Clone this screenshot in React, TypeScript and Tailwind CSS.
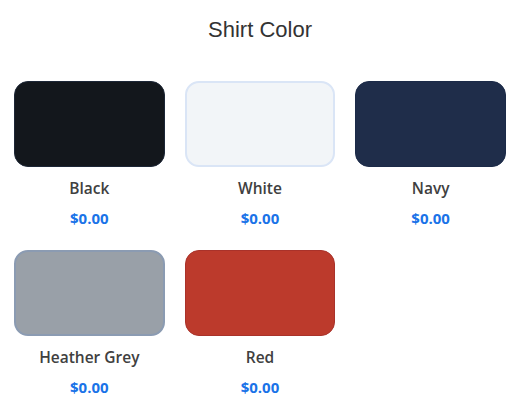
const swatches = [
  { name: "Black", price: "$0.00", cls: "bg-[#13171c] border-[#1c2636]" },
  { name: "White", price: "$0.00", cls: "bg-[#f2f5f8] border-[#dae5f6] border-2" },
  { name: "Navy", price: "$0.00", cls: "bg-[#1f2d4a] border-[#1b2a48]" },
  { name: "Heather Grey", price: "$0.00", cls: "bg-[#99a0a8] border-[#8b9bb2] border-2" },
  { name: "Red", price: "$0.00", cls: "bg-[#bc3a2c] border-[#a9322a]" },
];

export default function App() {
  return (
    <div className="min-h-screen bg-white px-[14px] pt-4">
      <h2 className="text-center text-[22px] leading-[28px] text-[#333] font-['Liberation_Sans',Arial,sans-serif]">
        Shirt Color
      </h2>
      <div className="mt-[37px] grid grid-cols-3 gap-x-5 gap-y-[22px] font-['Open_Sans','Noto_Sans',sans-serif]">
        {swatches.map((s) => (
          <div key={s.name} className="flex flex-col items-center">
            <div className={`h-[86px] w-full rounded-[14px] border ${s.cls}`} />
            <div className="mt-[11px] text-[15.5px] leading-5 font-semibold text-[#404040]">
              {s.name}
            </div>
            <div className="mt-[10px] text-[15px] leading-5 font-bold text-[#1a73e8]">
              {s.price}
            </div>
          </div>
        ))}
      </div>
    </div>
  );
}
